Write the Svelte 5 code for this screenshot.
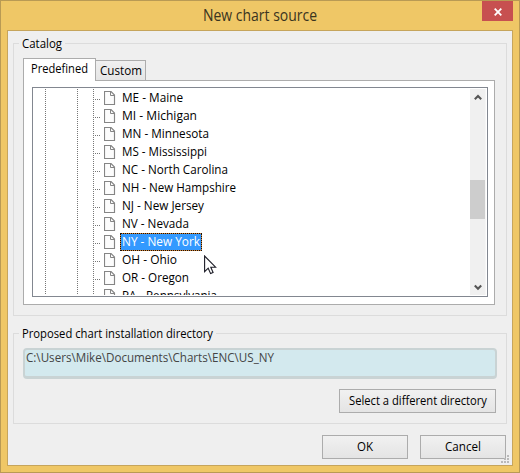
<script>
  const states = [
    { name: 'ME - Maine', w: 61 },
    { name: 'MI - Michigan', w: 75 },
    { name: 'MN - Minnesota', w: 87 },
    { name: 'MS - Mississippi', w: 85 },
    { name: 'NC - North Carolina', w: 106 },
    { name: 'NH - New Hampshire', w: 114 },
    { name: 'NJ - New Jersey', w: 82 },
    { name: 'NV - Nevada', w: 67 },
    { name: 'NY - New York', w: 78 },
    { name: 'OH - Ohio', w: 55 },
    { name: 'OR - Oregon', w: 67 },
    { name: 'PA - Pennsylvania', w: 95 }
  ];
  let selected = $state('NY - New York');
</script>

{#snippet label(text, w, size = 12)}
  <svg class="label" width={w} height="18"><text x="0" y="13" font-size={size} textLength={w} lengthAdjust="spacingAndGlyphs">{text}</text></svg>
{/snippet}

<div class="window">
  <header>
    <h1>{@render label('New chart source', 114, 15.5)}</h1>
    <button class="close" aria-label="Close">
      <svg width="8" height="8" viewBox="0 0 8 8"><path d="M.7.7 7.3 7.3M7.3.7.7 7.3" stroke="#fff" stroke-width="1.8" /></svg>
    </button>
  </header>
  <main>
    <section class="group catalog">
      <div class="legend">{@render label('Catalog', 40)}</div>
      <div class="tabs">
        <button class="tab active">{@render label('Predefined', 57)}</button>
        <button class="tab">{@render label('Custom', 42)}</button>
      </div>
      <div class="panel">
        <div class="tree">
          <div class="rows">
            {#each states as s}
              <div class="row" class:selected={s.name === selected}>
                <svg class="branch" width="71" height="18">
                  <path d="M12.5 0V18M44.5 0V18M60.5 0V18M62 10.5H68" stroke="#777" stroke-dasharray="1 1" fill="none" />
                </svg>
                <svg class="file" width="12" height="14" viewBox="0 0 12 14">
                  <path d="M.5.5H7L10.5 4V13.5H.5Z" fill="#fcfcfc" stroke="#858585" stroke-width="1.15" />
                  <path d="M6.5.5V4.5H10.5" fill="none" stroke="#858585" />
                </svg>
                <span class="name">{@render label(s.name, s.w)}</span>
              </div>
            {/each}
          </div>
          <div class="scroll">
            <svg width="8" height="7" viewBox="0 0 8 7"><path d="M.8 5.2 4 2 7.2 5.2" fill="none" stroke="#555" stroke-width="2.1" /></svg>
            <div class="thumb"></div>
            <svg width="8" height="7" viewBox="0 0 8 7"><path d="M.8 1.5 4 4.7 7.2 1.5" fill="none" stroke="#555" stroke-width="2.1" /></svg>
          </div>
        </div>
      </div>
    </section>
    <section class="group directory">
      <div class="legend">{@render label('Proposed chart installation directory', 191)}</div>
      <div class="path">{@render label('C:\\Users\\Mike\\Documents\\Charts\\ENC\\US_NY', 248)}</div>
      <button class="push wide">{@render label('Select a different directory', 138)}</button>
    </section>
    <footer>
      <button class="push">{@render label('OK', 16)}</button>
      <button class="push">{@render label('Cancel', 36)}</button>
    </footer>
    <svg class="grip" width="8" height="8" fill="#b9b9b9"><path d="M6 0h2v2H6zM3 3h2v2H3zM6 3h2v2H6zM0 6h2v2H0zM3 6h2v2H3zM6 6h2v2H6z" /></svg>
  </main>
  <svg class="cursor" width="13" height="20" viewBox="0 0 13 20">
    <path d="M.6 1V16.6L4.2 13.2 6.6 18.6 9.1 17.5 6.8 12.2H11.6Z" fill="#fff" stroke="#1c1c26" stroke-width="1.1" />
  </svg>
</div>

<style>
  :global(body) { margin: 0; overflow: hidden; }
  * { box-sizing: border-box; }
  button { font: inherit; padding: 0; margin: 0; border-radius: 0; color: inherit; }
  svg { display: block; flex: none; }
  .label { overflow: visible; fill: currentColor; }
  .window {
    position: relative; width: 520px; height: 473px; border: 1px solid #b99a54; background: #efc766;
    display: flex; flex-direction: column; padding: 0 6px 6px;
    font-family: "Open Sans", "Noto Sans", sans-serif; color: #000;
  }
  header { height: 29px; display: flex; justify-content: flex-end; flex: none; }
  h1 { margin: 7px 0 0; font-weight: 400; color: #3a3420; width: 114px; }
  .close {
    width: 31px; height: 20px; margin-left: 165px; border: 0; background: #c75050;
    display: flex; align-items: center; justify-content: center; padding-top: 1px;
  }
  main {
    position: relative; flex: 1; border: 1px solid #c6a55c; background: #efefef;
    padding: 12px 5px 0; display: flex; flex-direction: column;
  }
  .group { border: 1px solid #dcdcdc; flex: none; padding: 0 9px; display: flex; flex-direction: column; }
  .legend { height: 18px; margin: -9px 0 0 -4px; padding: 0 3px; background: #efefef; align-self: flex-start; }
  .catalog { height: 273px; }
  .tabs { display: flex; align-items: flex-end; height: 22px; margin-top: 5px; flex: none; }
  .tab {
    display: flex; border: 1px solid #acacac; border-bottom: 0; height: 20px;
    background: linear-gradient(#f0f0f0, #e5e5e5); border-left: 0; width: 50px; padding: 1px 0 0 4px;
  }
  .tab.active {
    position: relative; width: 73px; height: 23px; margin-bottom: -1px; background: #fff;
    border-left: 1px solid #acacac; padding: 1px 0 0 7px;
  }
  .panel { width: 472px; height: 225px; border: 1px solid #acacac; background: #fff; padding: 6px 6px 0 8px; }
  .tree { width: 456px; height: 210px; border: 1px solid #828790; display: flex; background: #fff; padding: 1px; }
  .rows { flex: 1; overflow: hidden; }
  .row { height: 18px; display: flex; align-items: center; margin-left: -1px; }
  .name { height: 18px; margin-left: 4px; padding: 0 2px; }
  .selected .name { background: #3399ff; color: #fff; outline: 1px dotted #1a1008; outline-offset: -1px; box-shadow: inset 0 0 0 1px #d08438; }
  .scroll {
    width: 16px; background: #f0f0f0; display: flex; flex-direction: column; align-items: center;
    padding: 5px 0 4px; border-right: 1px solid #f6f6f6;
  }
  .thumb { width: 15px; height: 39px; background: #cdcdcd; margin: 79px 0 auto; flex: none; }
  .directory { height: 91px; margin-top: 17px; }
  .path {
    width: 474px; height: 31px; margin-top: 5px; border: 2px solid #c9d3d4; border-width: 2px 2px 3px;
    border-radius: 4px; background: #d3e9ee; color: #444; padding: 0 0 0 1px; flex: none;
  }
  .path .label { margin-top: -1px; }
  .push {
    width: 86px; height: 24px; border: 1px solid #acacac; background: linear-gradient(#f1f1f1, #e4e4e4);
    display: flex; align-items: center; justify-content: center;
  }
  .wide { width: 157px; margin: 10px 0 0 316px; flex: none; }
  footer { display: flex; gap: 12px; justify-content: flex-end; margin-top: 11px; padding-right: 1px; }
  .grip { position: absolute; right: 3px; bottom: 2px; }
  .cursor { position: absolute; left: 203px; top: 254px; }
</style>
